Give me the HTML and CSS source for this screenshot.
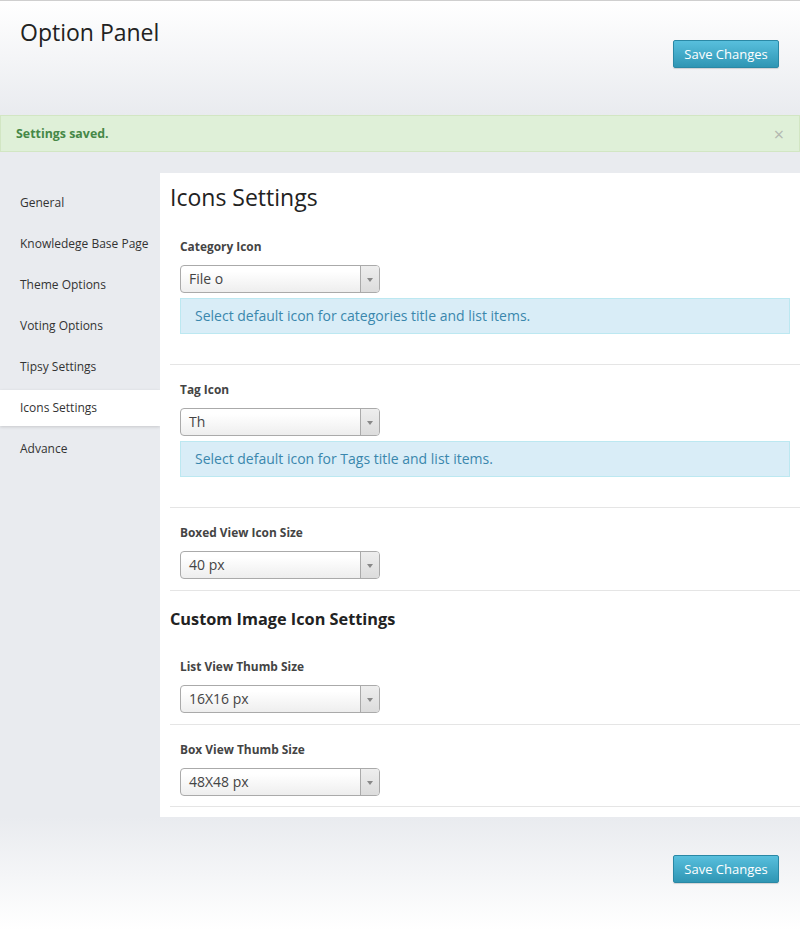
FILE: index.html
```html
<!DOCTYPE html>
<html>
<head>
<meta charset="utf-8">
<title>Option Panel</title>
<link rel="stylesheet" href="styles.css">
</head>
<body>
<div class="page">
  <header class="top">
    <h1 class="title">Option Panel</h1>
    <button class="btn">Save Changes</button>
  </header>
  <div class="alert">
    <span>Settings saved.</span>
    <span class="close">×</span>
  </div>
  <div class="main">
    <nav class="sidebar">
      <div class="nav-item">General</div>
      <div class="nav-item">Knowledege Base Page</div>
      <div class="nav-item">Theme Options</div>
      <div class="nav-item">Voting Options</div>
      <div class="nav-item">Tipsy Settings</div>
      <div class="nav-item active">Icons Settings</div>
      <div class="nav-item">Advance</div>
    </nav>
    <section class="panel">
      <h2 class="panel-title">Icons Settings</h2>
      <div class="row">
        <label class="label">Category Icon</label>
        <div class="select"><span class="val">File o</span><span class="arrow"></span></div>
        <div class="info">Select default icon for categories title and list items.</div>
      </div>
      <div class="row">
        <label class="label">Tag Icon</label>
        <div class="select"><span class="val">Th</span><span class="arrow"></span></div>
        <div class="info">Select default icon for Tags title and list items.</div>
      </div>
      <div class="row">
        <label class="label">Boxed View Icon Size</label>
        <div class="select"><span class="val">40 px</span><span class="arrow"></span></div>
      </div>
      <h3 class="sub-title">Custom Image Icon Settings</h3>
      <div class="row">
        <label class="label">List View Thumb Size</label>
        <div class="select"><span class="val">16X16 px</span><span class="arrow"></span></div>
      </div>
      <div class="row row-last">
        <label class="label">Box View Thumb Size</label>
        <div class="select"><span class="val">48X48 px</span><span class="arrow"></span></div>
      </div>
    </section>
  </div>
  <footer class="bottom">
    <button class="btn">Save Changes</button>
  </footer>
</div>
</body>
</html>
```
FILE: styles.css
```css
* { box-sizing: border-box; }
html, body { margin: 0; padding: 0; }
body {
  font-family: "Open Sans", "Liberation Sans", sans-serif;
  color: #333;
  background: #fff;
  width: 800px;
  height: 930px;
  overflow: hidden;
}
.page {
  border-top: 1px solid #cfcfcf;
}
.top {
  height: 114px;
  display: flex;
  justify-content: space-between;
  align-items: flex-start;
  padding: 0 21px 0 20px;
  background: linear-gradient(#ffffff, #e9ebef);
}
.title {
  margin: 15px 0 0;
  font-size: 23px;
  font-weight: 400;
  line-height: 32px;
  color: #222;
}
.btn {
  margin-top: 39px;
  width: 106px;
  height: 28px;
  padding: 0;
  font-family: "Open Sans", "Liberation Sans", sans-serif;
  font-size: 13px;
  color: #fff;
  background: linear-gradient(#58bfdd, #2f96b4);
  border: 1px solid #2a88a5;
  border-radius: 2px;
  box-shadow: 0 1px 1px rgba(0,0,0,0.15);
}
.alert {
  height: 37px;
  display: flex;
  align-items: center;
  justify-content: space-between;
  padding: 0 15px;
  background: #dff0d8;
  border: 1px solid #d2e6c3;
  color: #468847;
  font-size: 12.4px;
  font-weight: 700;
}
.close {
  font-size: 18px;
  font-weight: 400;
  color: #b3b8b0;
}
.main {
  display: flex;
  background: #e9ebef;
  padding-top: 21px;
}
.sidebar {
  width: 160px;
  padding-top: 12px;
}
.nav-item {
  height: 36px;
  line-height: 36px;
  margin-bottom: 5px;
  padding-left: 20px;
  font-size: 12px;
  color: #333;
}
.nav-item.active {
  background: #fff;
  box-shadow: 0 1px 3px rgba(0,0,0,0.15);
}
.panel {
  flex: 1;
  background: #fff;
  padding: 9px 0 10px 10px;
}
.panel-title {
  margin: 0;
  padding-bottom: 10px;
  font-size: 23px;
  font-weight: 400;
  line-height: 30px;
  color: #222;
}
.sub-title {
  margin: 0;
  padding: 16px 0 11px;
  font-size: 16.3px;
  font-weight: 700;
  line-height: 24px;
  color: #222;
}
.row {
  padding: 16px 10px 11px;
  border-bottom: 1px solid #e5e5e5;
}
.row-last {
  padding-bottom: 10px;
}
.label {
  display: block;
  font-size: 11.9px;
  font-weight: 700;
  line-height: 17px;
  color: #444;
  margin-bottom: 10px;
}
.select {
  width: 200px;
  height: 28px;
  display: flex;
  border: 1px solid #aaa;
  border-radius: 4px;
  background: linear-gradient(#ffffff 20%, #eeeeee);
  overflow: hidden;
}
.val {
  flex: 1;
  padding-left: 8px;
  font-size: 14px;
  line-height: 26px;
  color: #444;
}
.arrow {
  width: 19px;
  border-left: 1px solid #aaa;
  background: linear-gradient(#eeeeee, #dcdcdc);
  position: relative;
}
.arrow::after {
  content: "";
  position: absolute;
  left: 6px;
  top: 12px;
  border-left: 3px solid transparent;
  border-right: 3px solid transparent;
  border-top: 4px solid #888;
}
.info {
  margin-top: 5px;
  margin-bottom: 19px;
  height: 36px;
  padding-left: 14px;
  line-height: 34px;
  background: #d9edf7;
  border: 1px solid #bce8f1;
  color: #3a87ad;
  font-size: 14px;
}
.bottom {
  height: 113px;
  display: flex;
  justify-content: flex-end;
  align-items: flex-start;
  padding-right: 21px;
  background: linear-gradient(#e9ebef, #ffffff);
}
.bottom .btn {
  margin-top: 38px;
}
```
